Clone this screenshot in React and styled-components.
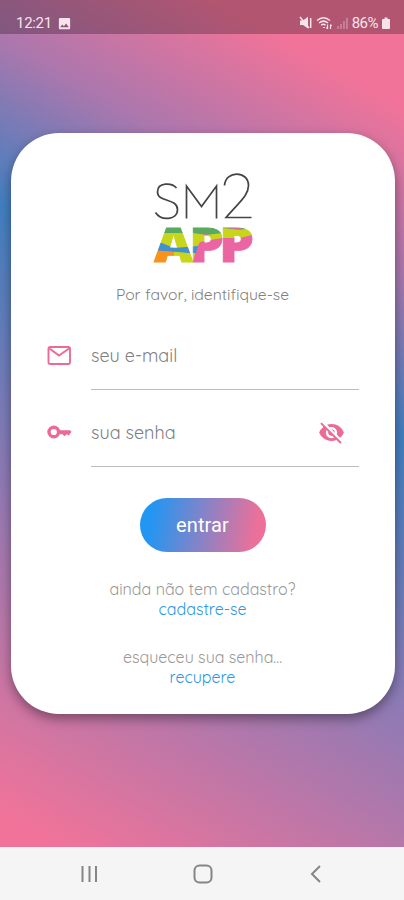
import React from 'react';
import styled, { createGlobalStyle } from 'styled-components';
import { MdVisibilityOff, MdImage } from 'react-icons/md';

const colors = {
	primary: '#ec6a98',
	blue: '#2e97e6',
	text: '#808080',
	textLight: '#999',
	line: '#bdbdbd',
	nav: '#f5f5f5',
	navIcon: '#858585',
	logoGreen: '#58aa60',
	logoLime: '#c7d51b',
	logoBlue: '#4290d0',
	logoOrange: '#f8921c',
	logoPink: '#eb65a2'
};

const GlobalStyle = createGlobalStyle`
	* {
		box-sizing: border-box;
	}
	body {
		margin: 0;
		font-family: Roboto, sans-serif;
	}
`;

// Screen styling
const Screen = styled.div`
	display: flex;
	flex-direction: column;
	width: 404px;
	height: 900px;
	overflow: hidden;
`;

const Content = styled.main`
	display: flex;
	flex-direction: column;
	align-items: center;
	height: 847px;
	background: linear-gradient(210deg, #f17399 10%, #ac77ad 25%, #417fc0 40.5%, #8f7ab4 66%, #f17399 97%);
`;

// Status bar styling
const StatusBar = styled.header`
	display: flex;
	justify-content: space-between;
	width: 100%;
	height: 34px;
	padding: 13px 14px 0 16px;
	background: rgba(0, 0, 0, 0.26);
	color: #f6e3ec;
`;

const StatusGroup = styled.div`
	display: flex;
	align-items: center;
	height: 20px;
	gap: ${({ $gap }) => $gap}px;
`;

const StatusText = styled.span`
	font-size: ${({ $size }) => $size}px;
	line-height: 20px;
	letter-spacing: ${({ $spacing }) => $spacing || 0}px;
`;

// Card styling
const Card = styled.section`
	display: flex;
	flex-direction: column;
	align-items: center;
	width: 384px;
	height: 581px;
	margin: 99px 0 0 1px;
	padding-top: 36px;
	border-radius: 48px;
	background: #fff;
	box-shadow: 0 5px 12px rgba(0, 0, 0, 0.38);
`;

const Logo = styled.svg`
	display: block;
	width: 106px;
	height: 112px;
`;

const Intro = styled.p`
	margin: 3px 0 0;
	color: ${colors.text};
	font-family: Quicksand, Lato, sans-serif;
	font-size: 15.7px;
	line-height: 20px;
`;

const Form = styled.form`
	display: flex;
	flex-direction: column;
	align-items: center;
	width: 100%;
	margin-top: 18px;
`;

const Field = styled.label`
	display: grid;
	grid-template-columns: 26px 268px;
	column-gap: 19px;
	height: 77px;
	width: 313px;
	color: ${colors.primary};
	svg {
		margin-top: 20px;
	}
`;

const FieldBox = styled.span`
	display: flex;
	justify-content: space-between;
	height: 68px;
	padding-right: 14px;
	border-bottom: 1.5px solid ${colors.line};
`;

const Placeholder = styled.span`
	margin-top: 22px;
	color: ${colors.text};
	font-family: Quicksand, Lato, sans-serif;
	font-size: 18px;
	line-height: 24px;
`;

const Submit = styled.button`
	width: 126px;
	height: 54px;
	margin-top: 22px;
	padding: 0;
	border: 0;
	border-radius: 27px;
	background: linear-gradient(100deg, #2196f3 10%, #ec7099 90%);
	color: #fff;
	font-family: Roboto, sans-serif;
	font-size: 20px;
	letter-spacing: 0.1px;
`;

const Help = styled.div`
	display: flex;
	flex-direction: column;
	align-items: center;
	margin-top: ${({ $top }) => $top}px;
	color: ${colors.textLight};
	font-family: Quicksand, Lato, sans-serif;
	font-size: 16px;
	line-height: 20px;
`;

const HelpLink = styled.a`
	color: ${colors.blue};
`;

// Android navigation bar
const NavBar = styled.nav`
	display: grid;
	grid-template-columns: 22px 22px 22px;
	justify-content: center;
	align-items: center;
	column-gap: 91px;
	height: 53px;
	padding-left: 2px;
	background: ${colors.nav};
	color: ${colors.navIcon};
	svg {
		display: block;
	}
`;

const SmLogo = () => (
	<Logo viewBox="0 0 106 112">
		<defs>
			<pattern id="stripes" width="106" height="112" patternUnits="userSpaceOnUse">
				<rect width="106" height="112" fill={colors.logoPink} />
				<path d="M0 50H106V62L88 59L72.500 60V67L42.500 64H0Z" fill={colors.logoGreen} />
				<path d="M0 64H42.500L56 66L72.500 64V59L90 61L106 58V65L90 69L72.500 69L60 71L50 73L46 80L42.500 96H0Z" fill={colors.logoLime} />
				<path d="M0 74L12 74L24 79L36 78L48 77L46 84L38 84L28 83L0 82Z" fill={colors.logoBlue} />
				<path d="M0 81L14 82L24 83V96H0Z" fill={colors.logoOrange} />
			</pattern>
		</defs>
		<g fill="none" stroke="#444" strokeWidth="1.7">
			<path d="M26.500 19C22 13.500 7.500 13 7.500 23C7.500 33.500 27.500 29 27.500 40.500C27.500 51.500 11 52 5.500 43.500" />
			<path d="M36.500 49.500V17L51.500 37.500L66.500 17V49.500" />
			<path d="M74.500 16.500C75.500 1 98.500 1.500 98.500 16.500C98.500 26 91 31.500 76 48.500H101.500" />
		</g>
		<g fontFamily="Open Sans, sans-serif" fontWeight="800" fontSize="48" fill="url(#stripes)" stroke="url(#stripes)" strokeWidth="0.800">
			<text x="4" y="92.500" textLength="39" lengthAdjust="spacingAndGlyphs">A</text>
			<text x="39" y="92.500" textLength="35" lengthAdjust="spacingAndGlyphs">P</text>
			<text x="69" y="92.500" textLength="35" lengthAdjust="spacingAndGlyphs">P</text>
		</g>
	</Logo>
);

const MailIcon = () => (
	<svg width="26" height="27" viewBox="0 0 26 27" fill="none" stroke="currentColor" strokeWidth="1.9">
		<rect x="2.500" y="5" width="21.500" height="17" rx="1.800" />
		<path d="M3.500 6.500L13 13.500L23 6.500" />
	</svg>
);

const KeyIcon = () => (
	<svg width="26" height="27" viewBox="0 0 26 27">
		<circle cx="7.800" cy="13" r="4.800" fill="none" stroke="currentColor" strokeWidth="3.400" />
		<path d="M13 11.200H24L25.500 12.800L22.800 16.500L20.700 15.200L18.500 17.300L16.500 15.200H13Z" fill="currentColor" />
	</svg>
);

const MuteIcon = () => (
	<svg width="13" height="14" viewBox="0 0 13 14">
		<path d="M1 4.500H4L9 0.800V12.500L4 9H1Z" fill="currentColor" />
		<path d="M1 1L10 12M11.700 2V12" stroke="currentColor" strokeWidth="1.5" />
	</svg>
);

const WifiIcon = () => (
	<svg width="17" height="14" viewBox="0 0 17 14" fill="none" stroke="currentColor" strokeWidth="1.500">
		<path d="M1 4.500Q7.500 -1 14 4.500M3 7Q7.500 3.300 12 7M5.200 9.300Q7.500 7.300 9.500 9.300" />
		<path d="M7 11.500H9M11.500 8.500V13M10.300 11.500L11.500 13M14.500 8.500V13M14.500 8.500L15.700 10" strokeWidth="1.2" />
	</svg>
);

const SignalIcon = () => (
	<svg width="11" height="12" viewBox="0 0 11 12" fill="currentColor" opacity="0.3">
		<path d="M0 9H2V12H0ZM3 7H5V12H3ZM6 4H8V12H6ZM9 1H11V12H9Z" />
	</svg>
);

const BatteryIcon = () => (
	<svg width="8" height="12" viewBox="0 0 8 12" fill="currentColor">
		<path d="M2.500 0.500H5.500V2H7Q8 2 8 3V11Q8 12 7 12H1Q0 12 0 11V3Q0 2 1 2H2.500Z" />
	</svg>
);

export const App = () => {
	return (
		<Screen>
			<GlobalStyle />
			<Content>
				<StatusBar>
					<StatusGroup $gap={5}>
						<StatusText $size={15} $spacing={-0.3}>12:21</StatusText>
						<MdImage size={15} />
					</StatusGroup>
					<StatusGroup $gap={4}>
						<MuteIcon />
						<WifiIcon />
						<SignalIcon />
						<StatusText $size={15} $spacing={-0.5}>86%</StatusText>
						<BatteryIcon />
					</StatusGroup>
				</StatusBar>
				<Card>
					<SmLogo />
					<Intro>Por favor, identifique-se</Intro>
					<Form>
						<Field>
							<MailIcon />
							<FieldBox>
								<Placeholder>seu e-mail</Placeholder>
							</FieldBox>
						</Field>
						<Field>
							<KeyIcon />
							<FieldBox>
								<Placeholder>sua senha</Placeholder>
								<MdVisibilityOff size={27} />
							</FieldBox>
						</Field>
						<Submit type="button">entrar</Submit>
					</Form>
					<Help $top={27}>
						<span>ainda não tem cadastro?</span>
						<HelpLink>cadastre-se</HelpLink>
					</Help>
					<Help $top={28}>
						<span>esqueceu sua senha...</span>
						<HelpLink>recupere</HelpLink>
					</Help>
				</Card>
			</Content>
			<NavBar>
				<svg width="22" height="22" viewBox="0 0 22 22" stroke="currentColor" strokeWidth="2">
					<path d="M3.500 3V19M10.500 3V19M17 3V19" />
				</svg>
				<svg width="22" height="22" viewBox="0 0 22 22" fill="none" stroke="currentColor" strokeWidth="2">
					<rect x="2.500" y="2.500" width="17" height="17" rx="5" />
				</svg>
				<svg width="22" height="22" viewBox="0 0 22 22" fill="none" stroke="currentColor" strokeWidth="2">
					<path d="M15 3L7 11L15 19" />
				</svg>
			</NavBar>
		</Screen>
	);
};

export default App;
